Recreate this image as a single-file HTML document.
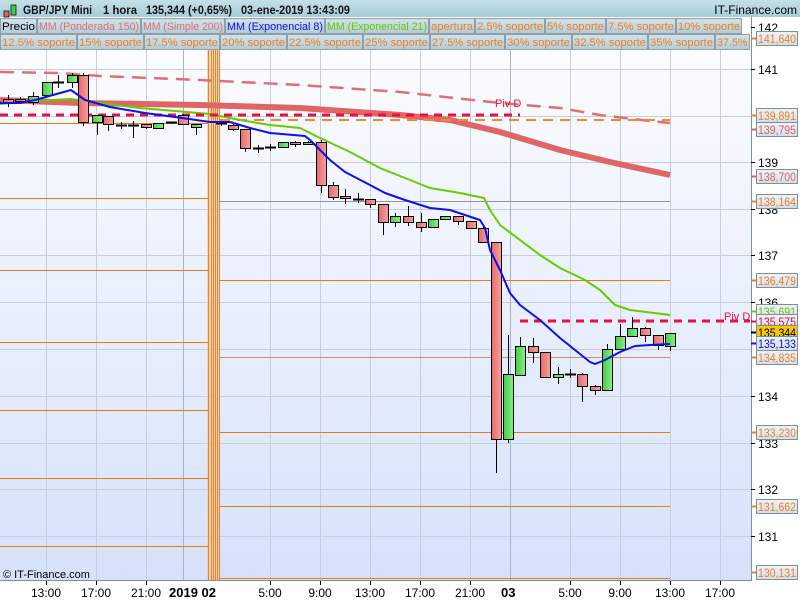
<!DOCTYPE html>
<html><head><meta charset="utf-8"><style>
body{margin:0;width:800px;height:600px;overflow:hidden;font-family:"Liberation Sans",sans-serif;background:#fff}
svg{position:absolute;left:0;top:0}
</style></head><body>
<svg id="s" width="800" height="600" xmlns="http://www.w3.org/2000/svg" font-family="Liberation Sans, sans-serif">
<defs>
<linearGradient id="bg" x1="0" y1="0" x2="0" y2="1"><stop offset="0" stop-color="#fbfcff"/><stop offset="1" stop-color="#d6e2fa"/></linearGradient>
<linearGradient id="hd" x1="0" y1="0" x2="0" y2="1"><stop offset="0" stop-color="#c4e0e8"/><stop offset="1" stop-color="#a8ccd8"/></linearGradient>
<linearGradient id="lg" x1="0" y1="0" x2="0" y2="1"><stop offset="0" stop-color="#d2e2ea"/><stop offset="1" stop-color="#b4ccd8"/></linearGradient>
<linearGradient id="lb" x1="0" y1="0" x2="0" y2="1"><stop offset="0" stop-color="#eef3f8"/><stop offset="1" stop-color="#d4dee8"/></linearGradient>
<linearGradient id="rc" x1="0" y1="0" x2="1" y2="0"><stop offset="0" stop-color="#e86a6a"/><stop offset="1" stop-color="#f4a0a0"/></linearGradient>
<linearGradient id="gc" x1="0" y1="0" x2="1" y2="0"><stop offset="0" stop-color="#44cc44"/><stop offset="1" stop-color="#88ee88"/></linearGradient>
</defs>
<rect x="0" y="0" width="800" height="600" fill="#fff"/>
<rect x="0" y="50" width="751" height="530" fill="url(#bg)"/>
<g id="grid" stroke="#c8cede" stroke-width="1"></g>
<g id="main"></g>
</svg>
<script>
const s=document.getElementById('main'),G=document.getElementById('grid'),NS='http://www.w3.org/2000/svg';
function el(p,t,a,txt){const e=document.createElementNS(NS,t);for(const k in a)e.setAttribute(k,a[k]);if(txt!=null)e.textContent=txt;p.appendChild(e);return e}
[69,116,162,209,255,302,349,396,443,489,536].forEach(y=>el(G,'line',{x1:0,y1:y+.5,x2:751,y2:y+.5}));
[46,96,146,270,320,370,420,470,570,620,670,720].forEach(x=>el(G,'line',{x1:x+.5,y1:50,x2:x+.5,y2:580}));
[183,510].forEach(x=>el(G,'line',{x1:x+.5,y1:50,x2:x+.5,y2:580,stroke:'#aab4c8'}));
// orange vertical band
el(s,'rect',{x:207,y:50,width:13,height:530,fill:'#f6c8a0',opacity:.7});
[208,211,213,215,217,219].forEach(x=>el(s,'line',{x1:x+.5,y1:50,x2:x+.5,y2:580,stroke:'#f08020','stroke-width':1}));
[198,270,342,410,478,546].forEach(y=>el(s,'line',{x1:0,y1:y+.5,x2:208,y2:y+.5,stroke:'#f07810'}));
[201,280,432,506,578].forEach(y=>el(s,'line',{x1:219,y1:y+.5,x2:670,y2:y+.5,stroke:'#f07810'}));
el(s,'line',{x1:0,y1:123.5,x2:208,y2:123.5,stroke:'#f07810'});
el(s,'line',{x1:219,y1:357.5,x2:670,y2:357.5,stroke:'#c89060'});
el(s,'line',{x1:219,y1:201.5,x2:670,y2:201.5,stroke:'#a09090'});
function pl(pts,st,w,da){el(s,'polyline',{points:pts.map(p=>p.join(',')).join(' '),fill:'none',stroke:st,'stroke-width':w,'stroke-dasharray':da||'','stroke-linejoin':'round'})}
pl([[0,72],[60,73],[100,76],[200,80],[300,85],[400,92],[500,103],[560,108],[600,115],[650,121],[670,123]],'#e07070',2.5,'14,8');
pl([[0,100],[80,103],[200,105],[300,108],[400,115],[450,120],[500,132],[560,150],[610,162],[670,175]],'#e06666',6);
el(s,'line',{x1:220,y1:120,x2:670,y2:120,stroke:'#f08a30','stroke-width':2,'stroke-dasharray':'10,7'});
pl([[0,104],[35,101],[70,99],[100,103],[140,108],[175,111],[210,114],[240,120],[270,125],[300,128],[320,138],[350,152],[380,168],[410,180],[430,188],[460,193],[484,198],[490,210],[500,225],[520,240],[540,255],[560,268],[585,280],[600,290],[615,305],[630,310],[670,315]],'#66cc00',2);
el(s,'line',{x1:0,y1:115,x2:520,y2:115,stroke:'#e8103c','stroke-width':3,'stroke-dasharray':'8,6'});
el(s,'line',{x1:520,y1:321,x2:750,y2:321,stroke:'#e8103c','stroke-width':3,'stroke-dasharray':'8,6'});
el(s,'text',{x:495,y:107,fill:'#e8103c','font-size':11},'Piv D');
el(s,'text',{x:724,y:320,fill:'#e8103c','font-size':11},'Piv D');
const C=[[8,99,102,95,107],[20,99,101,97,104],[33,102,96,92,105],[47,95,82,82,96],[58,82,82,75,88],[72,82,75,73,88],[83,75,122,73,126],[97,122,115,115,135],[108,116,124,116,131],[121,125,125,122,129],[133,125,125,121,138],[146,124,127,124,129],[158,128,123,123,128],[171,122,122,122,124],[183,115,124,114,124],[196,127,124,124,135],[221,123,123,121,126],[233,125,129,124,131],[245,129,148,129,152],[258,148,148,145,153],[270,147,147,144,151],[283,147,142,142,147],[295,142,144,141,147],[308,144,142,141,145],[321,142,185,140,193],[333,185,197,182,200],[345,196,198,189,204],[358,199,199,193,203],[370,199,204,199,208],[383,204,222,204,235],[395,222,216,213,227],[408,216,222,206,226],[421,222,227,213,232],[433,227,219,219,228],[445,219,216,216,220],[458,216,221,216,225],[471,221,228,221,229],[483,228,242,227,243],[496,242,439,242,473],[508,439,374,335,443],[520,375,346,337,375],[533,346,352,338,363],[545,352,377,352,377],[558,377,374,367,384],[570,374,374,369,378],[582,374,386,373,402],[595,386,390,385,395],[607,390,349,344,390],[620,349,336,324,349],[632,336,328,317,336],[645,328,335,327,342],[658,335,345,335,350],[670,346,333,333,351]];
C.forEach(([x,o,c,h,l])=>{el(s,'line',{x1:x+.5,y1:h,x2:x+.5,y2:l,stroke:'#000'});const t=Math.min(o,c),b=Math.max(o,c);
if(b-t<1.5){el(s,'line',{x1:x-5,y1:t+.5,x2:x+6,y2:t+.5,stroke:'#000','stroke-width':2})}else el(s,'rect',{x:x-4.5,y:t+.5,width:10,height:b-t,fill:c>o?'url(#rc)':'url(#gc)',stroke:'#000'})});
pl([[0,103],[20,103],[35,100],[71,90],[85,100],[110,107],[145,113],[175,117],[210,122],[230,122],[250,128],[270,133],[305,136],[310,140],[330,160],[345,172],[370,185],[385,193],[405,200],[430,208],[450,210],[465,215],[480,220],[485,228],[490,250],[500,270],[510,293],[520,305],[540,320],[560,338],[575,350],[590,362],[595,364],[605,360],[620,352],[635,346],[650,345],[670,344]],'#1010e8',2);
el(s,'text',{x:3,y:578,'font-size':11,fill:'#000'},'© IT-Finance.com');
const R=document.getElementById('s');
el(R,'rect',{x:751,y:50,width:49,height:550,fill:'#fff'});
el(R,'line',{x1:751.5,y1:0,x2:751.5,y2:581,stroke:'#7890a0'});
[[142,27],[141,69],[139,162],[138,209],[137,255],[136,302],[134,396],[133,443],[132,489],[131,536]].forEach(([v,y])=>{el(R,'line',{x1:751,y1:y+.5,x2:755,y2:y+.5,stroke:'#000'});el(R,'text',{x:758,y:y+5,'font-size':12},v)});
[['141,640',38,'#f08020'],['139,891',115,'#f08020'],['139,795',129,'#e06060'],['138,700',176,'#e06060'],['138,164',201,'#f08020'],['136,479',280,'#f08020'],['135,691',311,'#66cc00'],['135,575',321,'#e8103c'],['135,344',332,'#000'],['135,133',343,'#1010e8'],['134,835',357,'#f08020'],['133,230',432,'#f08020'],['131,662',506,'#f08020'],['130,131',572,'#f08020']].forEach(([t,y,c])=>{
el(R,'line',{x1:751,y1:y+.5,x2:756,y2:y+.5,stroke:c,'stroke-width':2});
el(R,'rect',{x:756.5,y:y-6.5,width:41,height:14,fill:t=='135,344'?'#f8c800':'url(#lb)',stroke:'#7890a0'});
el(R,'text',{x:758,y:y+5,'font-size':11.5,fill:c,textLength:38,lengthAdjust:'spacingAndGlyphs'},t)});
el(R,'rect',{x:0,y:581,width:800,height:19,fill:'#fff'});
el(R,'line',{x1:0,y1:580.5,x2:752,y2:580.5,stroke:'#7890a0'});
[['13:00',46],['17:00',96],['21:00',146],['5:00',270],['9:00',320],['13:00',370],['17:00',420],['21:00',470],['5:00',570],['9:00',620],['13:00',670],['17:00',720]].forEach(([t,x])=>{el(R,'line',{x1:x+.5,y1:581,x2:x+.5,y2:585,stroke:'#000'});el(R,'text',{x:x,y:597,'font-size':12,'text-anchor':'middle'},t)});
el(R,'text',{x:169,y:597,'font-size':13,'font-weight':'bold'},'2019 02');
el(R,'text',{x:501,y:597,'font-size':13,'font-weight':'bold'},'03');
el(R,'rect',{x:0,y:0,width:800,height:17,fill:'url(#hd)'});
el(R,'rect',{x:4,y:11,width:5,height:6,fill:'#e06060',stroke:'#000','stroke-width':.7});
el(R,'rect',{x:11,y:5,width:5,height:10,fill:'#44cc44',stroke:'#000','stroke-width':.7});
[['GBP/JPY Mini',23,69],['1 hora',103,34],['135,344 (+0,65%)',146,86],['03-ene-2019 13:43:09',241,109]].forEach(([t,x,w])=>el(R,'text',{x:x,y:14,'font-size':12,'font-weight':'bold',fill:'#111',textLength:w,lengthAdjust:'spacingAndGlyphs'},t));
el(R,'text',{x:797,y:14,'font-size':12,'text-anchor':'end'},'IT-Finance.com');
function row(y,items){let x=0;items.forEach(([t,c,w])=>{el(R,'rect',{x:x+.5,y:y+.5,width:w-1,height:15,fill:'url(#lg)',stroke:'#8aa0ac'});el(R,'text',{x:x+2,y:y+12,'font-size':11,fill:c,textLength:Math.min(w-4,t.length*6.1),lengthAdjust:'spacingAndGlyphs'},t);x+=w});}
row(18,[['Precio','#000',37],['MM (Ponderada 150)','#e07070',104],['MM (Simple 200)','#e07070',84],['MM (Exponencial 8)','#1010e8',100],['MM (Exponencial 21)','#66cc00',104],['apertura','#f08020',46],['2.5% soporte','#f08020',70],['5% soporte','#f08020',61],['7.5% soporte','#f08020',70],['10% soporte','#f08020',66]]);
el(R,'rect',{x:743,y:18,width:8,height:16,fill:'#fff'});
row(34,[['12.5% soporte','#f08020',77],['15% soporte','#f08020',67],['17.5% soporte','#f08020',76],['20% soporte','#f08020',67],['22.5% soporte','#f08020',76],['25% soporte','#f08020',67],['27.5% soporte','#f08020',75],['30% soporte','#f08020',67],['32.5% soporte','#f08020',76],['35% soporte','#f08020',67],['37.5%','#f08020',35]]);
</script>
</body></html>
